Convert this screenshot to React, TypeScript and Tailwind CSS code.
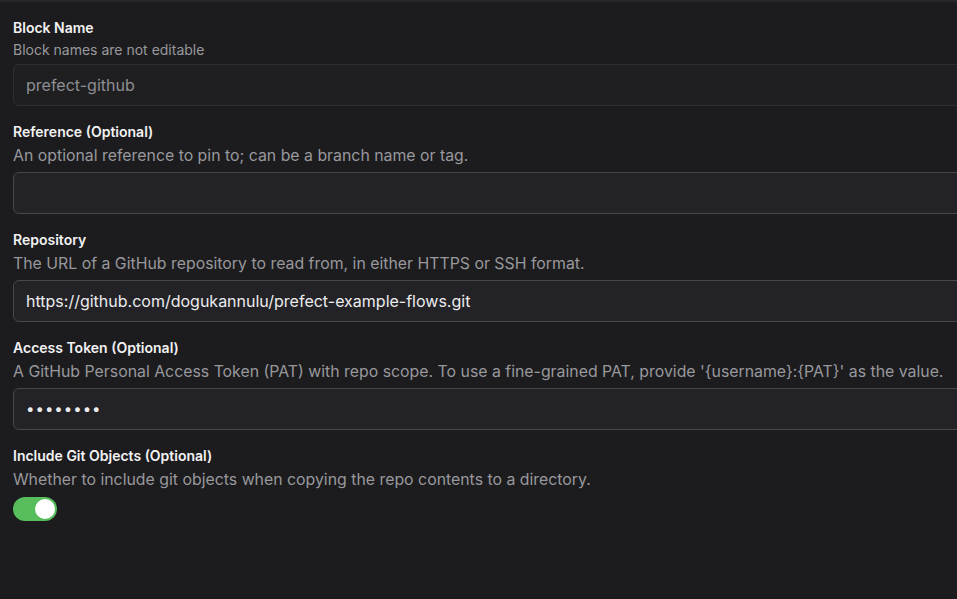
import React from "react";

const font = { fontFamily: "Inter, 'Noto Sans', sans-serif" };

function Label({ children }: { children: React.ReactNode }) {
  return <div className="text-[14px] leading-[20px] font-semibold text-[#f2f2f3]">{children}</div>;
}

function Desc({ children }: { children: React.ReactNode }) {
  return <div className="text-[15.85px] leading-[24px] text-[#98989d] mt-[2px] whitespace-nowrap">{children}</div>;
}

function Field({ value, dots }: { value?: string; dots?: boolean }) {
  return (
    <div className="mt-[4px] h-[42px] w-[980px] rounded-[6px] border border-[#47474c] bg-[#232327] flex items-center px-[12px] text-[16px] text-[#ececee]">
      {dots ? <span className="tracking-[1px] text-[15px]">••••••••</span> : value}
    </div>
  );
}

export default function App() {
  return (
    <div className="w-[957px] h-[599px] overflow-hidden bg-[#1c1c1e]" style={font}>
      <div className="h-[2px] bg-[#27272a]" />
      <div className="pl-[13px] pt-[16px] flex flex-col">
        <div>
          <Label>Block Name</Label>
          <div className="text-[14px] leading-[20px] text-[#98989d] mt-[2px]">Block names are not editable</div>
          <div className="mt-[4px] h-[42px] w-[980px] rounded-[6px] border border-[#2f2f33] bg-[#1f1f21] flex items-center px-[12px] text-[16px] text-[#8e8e93]">
            prefect-github
          </div>
        </div>
        <div className="mt-[16px]">
          <Label>Reference (Optional)</Label>
          <Desc>An optional reference to pin to; can be a branch name or tag.</Desc>
          <Field value="" />
        </div>
        <div className="mt-[16px]">
          <Label>Repository</Label>
          <Desc>The URL of a GitHub repository to read from, in either HTTPS or SSH format.</Desc>
          <Field value="https://github.com/dogukannulu/prefect-example-flows.git" />
        </div>
        <div className="mt-[16px]">
          <Label>Access Token (Optional)</Label>
          <Desc>A GitHub Personal Access Token (PAT) with repo scope. To use a fine-grained PAT, provide '{"{username}"}:{"{PAT}"}' as the value.</Desc>
          <Field dots />
        </div>
        <div className="mt-[16px]">
          <Label>Include Git Objects (Optional)</Label>
          <Desc>Whether to include git objects when copying the repo contents to a directory.</Desc>
          <div className="mt-[5px] w-[44px] h-[24px] rounded-full bg-[#58bd5c] flex items-center justify-end px-[2px]">
            <div className="w-[20px] h-[20px] rounded-full bg-white" />
          </div>
        </div>
      </div>
    </div>
  );
}
